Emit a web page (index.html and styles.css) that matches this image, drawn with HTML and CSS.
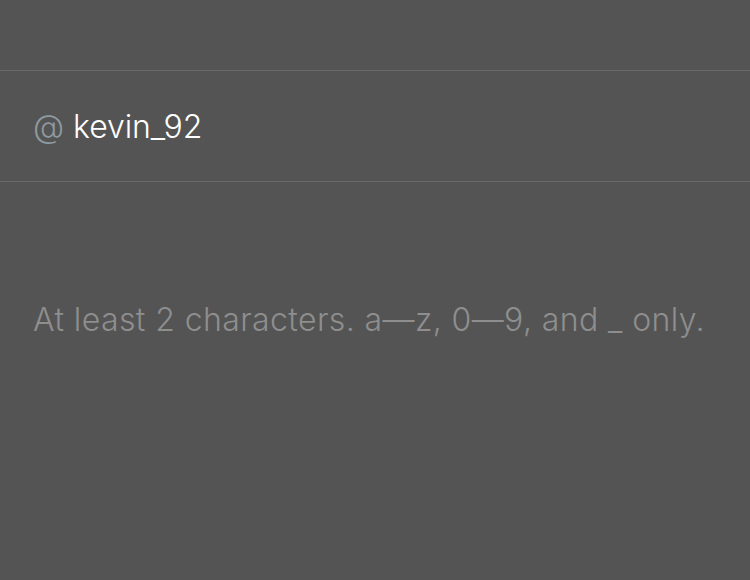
FILE: index.html
```html
<!DOCTYPE html>
<html>
<head>
<meta charset="utf-8">
<link rel="stylesheet" href="styles.css">
</head>
<body>
<div class="page">
  <div class="field">
    <span class="at">@</span>
    <span class="value">kevin_92</span>
  </div>
  <p class="hint">At least 2 characters. a—z, 0—9, and _ only.</p>
</div>
</body>
</html>
```
FILE: styles.css
```css
html, body {
  margin: 0;
  padding: 0;
  background: #545454;
  height: 100%;
}
.page {
  padding-top: 70px;
  font-family: Inter, "Liberation Sans", Arial, sans-serif;
  font-weight: 300;
}
.field {
  display: flex;
  align-items: center;
  gap: 9px;
  height: 110px;
  padding: 0 33px;
  border-top: 1px solid #6a6a6a;
  border-bottom: 1px solid #6a6a6a;
  font-size: 32px;
}
.at {
  color: #8e9aa0;
}
.value {
  color: #ffffff;
  letter-spacing: -0.1px;
}
.hint {
  margin: 0;
  padding: 118px 33px 0;
  font-size: 32px;
  letter-spacing: 0.4px;
  color: #8e8e8e;
}
```
